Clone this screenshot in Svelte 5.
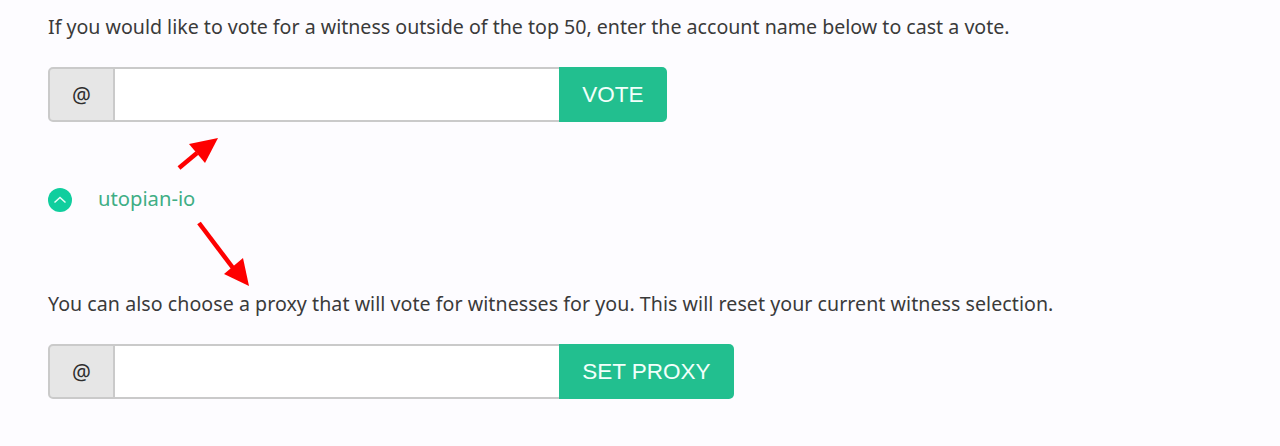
<script lang="ts">
	const voteLabel = 'VOTE';
	const proxyLabel = 'SET PROXY';
</script>

<main class="page">
	<p class="first">If you would like to vote for a witness outside of the top 50, enter the account name below to cast a vote.</p>
	<form class="group">
		<span class="addon">@</span>
		<input type="text" />
		<button type="button">{voteLabel}</button>
	</form>

	<div class="voted">
		<span class="up">
			<svg width="24" height="24" viewBox="0 0 24 24"><path d="M6.5 14.5l5.5-5 5.5 5" fill="none" stroke="#e8fff8" stroke-width="1.5" /></svg>
		</span>
		<span class="name">utopian-io</span>
	</div>

	<p class="second">You can also choose a proxy that will vote for witnesses for you. This will reset your current witness selection.</p>
	<form class="group">
		<span class="addon">@</span>
		<input type="text" />
		<button type="button">{proxyLabel}</button>
	</form>

	<svg class="arrows" width="1280" height="446" viewBox="0 0 1280 446">
		<path d="M179 168L197 153" stroke="#fe0000" stroke-width="4.5" fill="none" />
		<path d="M218 138L189 144L205 163Z" fill="#fe0000" />
		<path d="M199 223L233 268" stroke="#fe0000" stroke-width="4.5" fill="none" />
		<path d="M249 286L243 258L224 274Z" fill="#fe0000" />
	</svg>
</main>

<style>
	:global(body) {
		margin: 0;
		background: #fdfcff;
	}

	.page {
		position: relative;
		width: 1280px;
		height: 446px;
		padding: 14px 0 0 48px;
		box-sizing: border-box;
		font-family: 'Noto Sans', 'Open Sans', sans-serif;
		color: #3a3a3a;
		overflow: hidden;
	}

	p {
		margin: 0;
		font-size: 19.6px;
		line-height: 26px;
		white-space: nowrap;
	}

	.first {
		margin-bottom: 27px;
	}

	.second {
		margin-bottom: 27px;
		letter-spacing: 0.05px;
	}

	.group {
		display: flex;
		height: 55px;
	}

	.addon {
		box-sizing: border-box;
		width: 67px;
		display: flex;
		align-items: center;
		justify-content: center;
		background: #e6e6e6;
		border: 2px solid #cacaca;
		border-radius: 5px 0 0 5px;
		color: #2e2e2e;
		font-size: 21px;
	}

	input {
		box-sizing: border-box;
		width: 444px;
		height: 100%;
		margin: 0;
		padding: 0 10px;
		background: #fff;
		border: 2px solid #cacaca;
		border-left: 0;
		border-right: 0;
		border-radius: 0;
		outline: none;
	}

	button {
		height: 100%;
		margin: 0;
		padding: 0 23.2px;
		background: #22bf8f;
		color: #f2fffb;
		border: 0;
		border-radius: 0 5px 5px 0;
		font-family: 'Liberation Sans', Arial, sans-serif;
		font-size: 22.5px;
		white-space: nowrap;
	}

	.voted {
		display: flex;
		align-items: center;
		gap: 26px;
		height: 24px;
		margin: 66px 0 79px;
	}

	.up {
		display: block;
		width: 24px;
		height: 24px;
		border-radius: 50%;
		background: #10ce9e;
	}

	.up svg {
		display: block;
	}

	.name {
		margin-bottom: 4px;
		color: #3fae85;
		font-size: 20.2px;
		line-height: 24px;
	}

	.arrows {
		position: absolute;
		inset: 0;
		pointer-events: none;
	}
</style>
